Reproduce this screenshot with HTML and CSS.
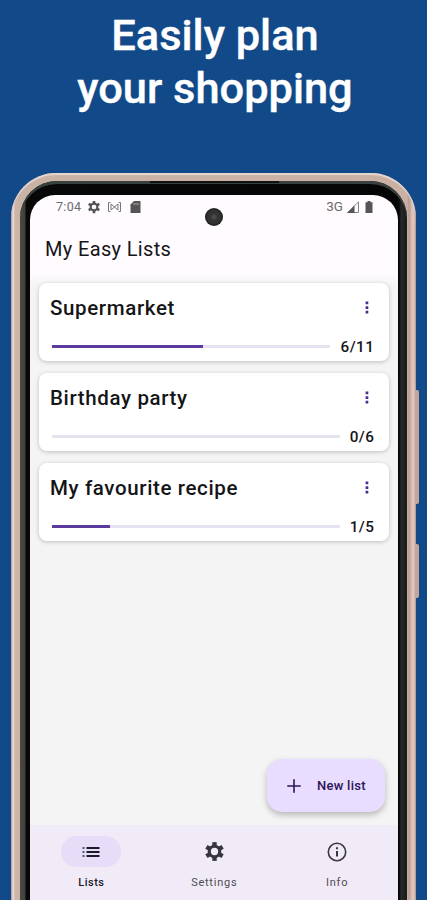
FILE: index.html
```html
<!DOCTYPE html>
<html lang="en">
<head>
<meta charset="utf-8">
<title>My Easy Lists</title>
<link rel="stylesheet" href="styles.css">
</head>
<body>
<h1 class="headline">Easily plan<br>your shopping</h1>
<div class="phone">
  <i class="side-button volume"></i>
  <i class="side-button power"></i>
  <i class="speaker"></i>
  <div class="bezel">
    <div class="screen">
      <i class="camera"></i>
      <div class="status">
        <span class="clock">7:04</span>
        <svg class="s-gear" width="14" height="14" viewBox="0 0 24 24"><g fill="#555"><path d="M9.800 1.500h4.400v21H9.800z"/><path d="M9.800 1.500h4.400v21H9.800z" transform="rotate(60 12 12)"/><path d="M9.800 1.500h4.400v21H9.800z" transform="rotate(120 12 12)"/></g><circle cx="12" cy="12" r="5.800" fill="#fffbff" stroke="#555" stroke-width="3.600"/></svg>
        <svg class="s-cast" width="15" height="12" viewBox="0 0 15 12" fill="none" stroke="#777"><path d="M3.500 1.500h-2v9h2M11.500 1.500h2v9h-2M4 3l7 6V3L4 9z"/></svg>
        <svg class="s-card" width="11" height="12" viewBox="0 0 11 12"><path fill="#555" d="M4 0h6.500v12H.5V3.500z"/><path stroke="#bbb" stroke-width=".8" d="M4 2v2M6 2v2M8 2v2"/></svg>
        <span class="network">3G</span>
        <svg class="s-signal" width="12" height="12" viewBox="0 0 12 12"><path d="M.8 11.500h10.700V.8z" fill="none" stroke="#777" stroke-width=".9"/><path fill="#555" d="M0 12h7.500V4.500z"/></svg>
        <svg class="s-battery" width="8" height="12" viewBox="0 0 8 12"><path fill="#555" d="M2.500 0h3v1.300h2V12h-7V1.300h2z"/></svg>
      </div>
      <h2 class="title">My Easy Lists</h2>
      <main class="lists">
        <article class="card">
          <div class="row"><h3>Supermarket</h3><svg class="more" width="4" height="14" viewBox="0 0 4 14" fill="#4a2b91"><path d="M.6.600h2.700v2.700H.6zM.6 5.200h2.700v2.700H.6zM.6 9.800h2.700v2.700H.6z"/></svg></div>
          <div class="row progress"><div class="track"><div class="fill" style="width:54.100%"></div></div><span>6/11</span></div>
        </article>
        <article class="card">
          <div class="row"><h3>Birthday party</h3><svg class="more" width="4" height="14" viewBox="0 0 4 14" fill="#4a2b91"><path d="M.6.600h2.700v2.700H.6zM.6 5.200h2.700v2.700H.6zM.6 9.800h2.700v2.700H.6z"/></svg></div>
          <div class="row progress"><div class="track"></div><span>0/6</span></div>
        </article>
        <article class="card">
          <div class="row"><h3>My favourite recipe</h3><svg class="more" width="4" height="14" viewBox="0 0 4 14" fill="#4a2b91"><path d="M.6.600h2.700v2.700H.6zM.6 5.200h2.700v2.700H.6zM.6 9.800h2.700v2.700H.6z"/></svg></div>
          <div class="row progress"><div class="track"><div class="fill" style="width:20%"></div></div><span>1/5</span></div>
        </article>
      </main>
      <div class="new-list">
        <svg width="14" height="14" viewBox="0 0 14 14" stroke="#2b1459" stroke-width="1.600"><path d="M7 .3v13.400M.3 7h13.400"/></svg>
        <span>New list</span>
      </div>
      <nav class="tabs">
        <div class="tab active">
          <span class="pill"><svg width="18" height="12" viewBox="0 0 18 12"><path fill="#1d1929" d="M4.500 1h13v2h-13zM4.500 5h13v2h-13zM4.500 9h13v2h-13z"/><path fill="#5d5769" d="M.5 1h2v2h-2zM.5 5h2v2h-2zM.5 9h2v2h-2z"/></svg></span>
          <span class="label">Lists</span>
        </div>
        <div class="tab">
          <span class="pill"><svg width="21" height="21" viewBox="0 0 24 24"><g fill="#38343e"><path d="M9.500 1.300h5v21.400h-5z"/><path d="M9.500 1.300h5v21.400h-5z" transform="rotate(60 12 12)"/><path d="M9.500 1.300h5v21.400h-5z" transform="rotate(120 12 12)"/></g><circle cx="12" cy="12" r="6" fill="#f1ebf7" stroke="#38343e" stroke-width="3.600"/></svg></span>
          <span class="label">Settings</span>
        </div>
        <div class="tab">
          <span class="pill"><svg width="20" height="20" viewBox="0 0 20 20"><circle cx="10" cy="10" r="8.700" fill="none" stroke="#3c3842" stroke-width="1.600"/><path fill="#3c3842" d="M9 9h2v5.500H9zM9 5.300h2v2H9z"/></svg></span>
          <span class="label">Info</span>
        </div>
      </nav>
    </div>
  </div>
</div>
</body>
</html>
```
FILE: styles.css
```css
* { box-sizing: border-box; }
body {
  margin: 0;
  height: 900px;
  overflow: hidden;
  background: #124989;
  font-family: Roboto, sans-serif;
  color: #151517;
}
h1, h2, h3 { margin: 0; font-weight: 500; }
.headline {
  height: 173px;
  padding: 9px 0 0 3px;
  text-align: center;
  font-size: 43.400px;
  line-height: 53px;
  color: #fff;
  -webkit-text-stroke: .4px #fff;
}
.phone {
  position: relative;
  width: 405px;
  height: 727px;
  margin-left: 11px;
  padding: 8px 9px 0;
  border-radius: 45px 45px 0 0;
  background: linear-gradient(90deg, #9b8d96 0, #f1dfd9 2px, #cdb7aa 4px, #c8b3a5 8px, #cbb0a4 396px, #b99c91 398px, #dcc1b7 401px, #e2c9c0 403px, #a18b8a 405px);
  box-shadow: inset 0 2px 1px #e5d7d0;
}
.side-button {
  position: absolute;
  left: 404px;
  width: 4px;
  border-radius: 0 2px 2px 0;
  background: #c2a69b;
}
.volume { top: 217px; height: 114px; }
.power { top: 371px; height: 54px; }
.speaker {
  position: absolute;
  left: 139px;
  top: 8px;
  width: 129px;
  height: 2px;
  background: #111;
  z-index: 1;
}
.bezel {
  height: 719px;
  padding: 14px 9.500px 0 10px;
  border-radius: 37px 37px 0 0;
  background: linear-gradient(90deg, #4b4a46 0, #3f3f3b 5px, #080808 6px, #050505 379px, #252927 381px, #1b1d1c 386px);
  box-shadow: inset 0 3px 0 #39413f;
}
.screen {
  position: relative;
  display: flex;
  flex-direction: column;
  height: 705px;
  border-radius: 25px 25px 0 0;
  background: linear-gradient(#fffbff 0, #fffbff 78px, #f4f4f4 92px);
  overflow: hidden;
}
.camera {
  position: absolute;
  left: 174.500px;
  top: 12.500px;
  width: 18px;
  height: 18px;
  border-radius: 50%;
  background: radial-gradient(circle, #555 0, #303030 4px, #333 6px, #1c1c1c 9px);
}
.status {
  display: flex;
  align-items: center;
  height: 24px;
  padding: 0 24.500px 1px 26px;
  font-size: 12.500px;
  color: #6c6c6c;
}
.clock { width: 31px; letter-spacing: .3px; }
.s-cast { margin-left: 6px; }
.s-card { margin-left: 8px; }
.network { margin-left: auto; font-size: 13.500px; line-height: 14px; padding-bottom: 1px; }
.s-signal { margin-left: 4px; }
.s-battery { margin-left: 6px; }
.title {
  height: 64px;
  padding: 18px 0 0 15px;
  font-size: 20px;
  line-height: 24px;
  font-weight: 400;
  letter-spacing: .35px;
}
.lists {
  display: flex;
  flex-direction: column;
  gap: 12px;
  padding: 0 8.500px 0 9px;
}
.card {
  height: 78px;
  padding: 12px 14.500px 0 11px;
  border-radius: 8px;
  background: #fff;
  box-shadow: 0 1px 4px rgba(0, 0, 0, .22);
}
.row { display: flex; align-items: center; justify-content: space-between; }
.card h3 { font-size: 20.500px; line-height: 26px; letter-spacing: .63px; }
.more { margin-right: 6px; }
.progress { height: 20px; margin-top: 15px; padding-left: 2px; }
.track { flex: 1; height: 3px; border-radius: 1px; background: #e5e1ee; }
.fill { height: 3px; background: #5b3c9e; }
.progress span { margin-left: 10px; padding-top: 1px; font-size: 15.300px; font-weight: 500; letter-spacing: .5px; }
.new-list {
  display: flex;
  align-items: center;
  gap: 16px;
  width: 118px;
  height: 53px;
  margin: auto 12.500px 13px auto;
  padding-left: 20px;
  border-radius: 15px;
  background: #e8ddfe;
  box-shadow: 0 3px 6px rgba(0, 0, 0, .25);
  font-size: 13px;
  font-weight: 500;
  letter-spacing: .25px;
  color: #2b1459;
}
.tabs { display: flex; height: 75px; background: #f1ebf7; margin-right: -1px; }
.tab {
  flex: 1;
  display: flex;
  flex-direction: column;
  align-items: center;
  padding-top: 11px;
  color: #4f4b55;
}
.pill {
  display: flex;
  align-items: center;
  justify-content: center;
  width: 60px;
  height: 31px;
  border-radius: 16px;
}
.active { color: #1d1929; }
.active .pill { background: #e6ddf9; }
.label { margin-top: 9px; font-size: 11px; line-height: 13px; font-weight: 400; letter-spacing: .75px; }
.active .label { font-weight: 500; letter-spacing: .5px; }
```
